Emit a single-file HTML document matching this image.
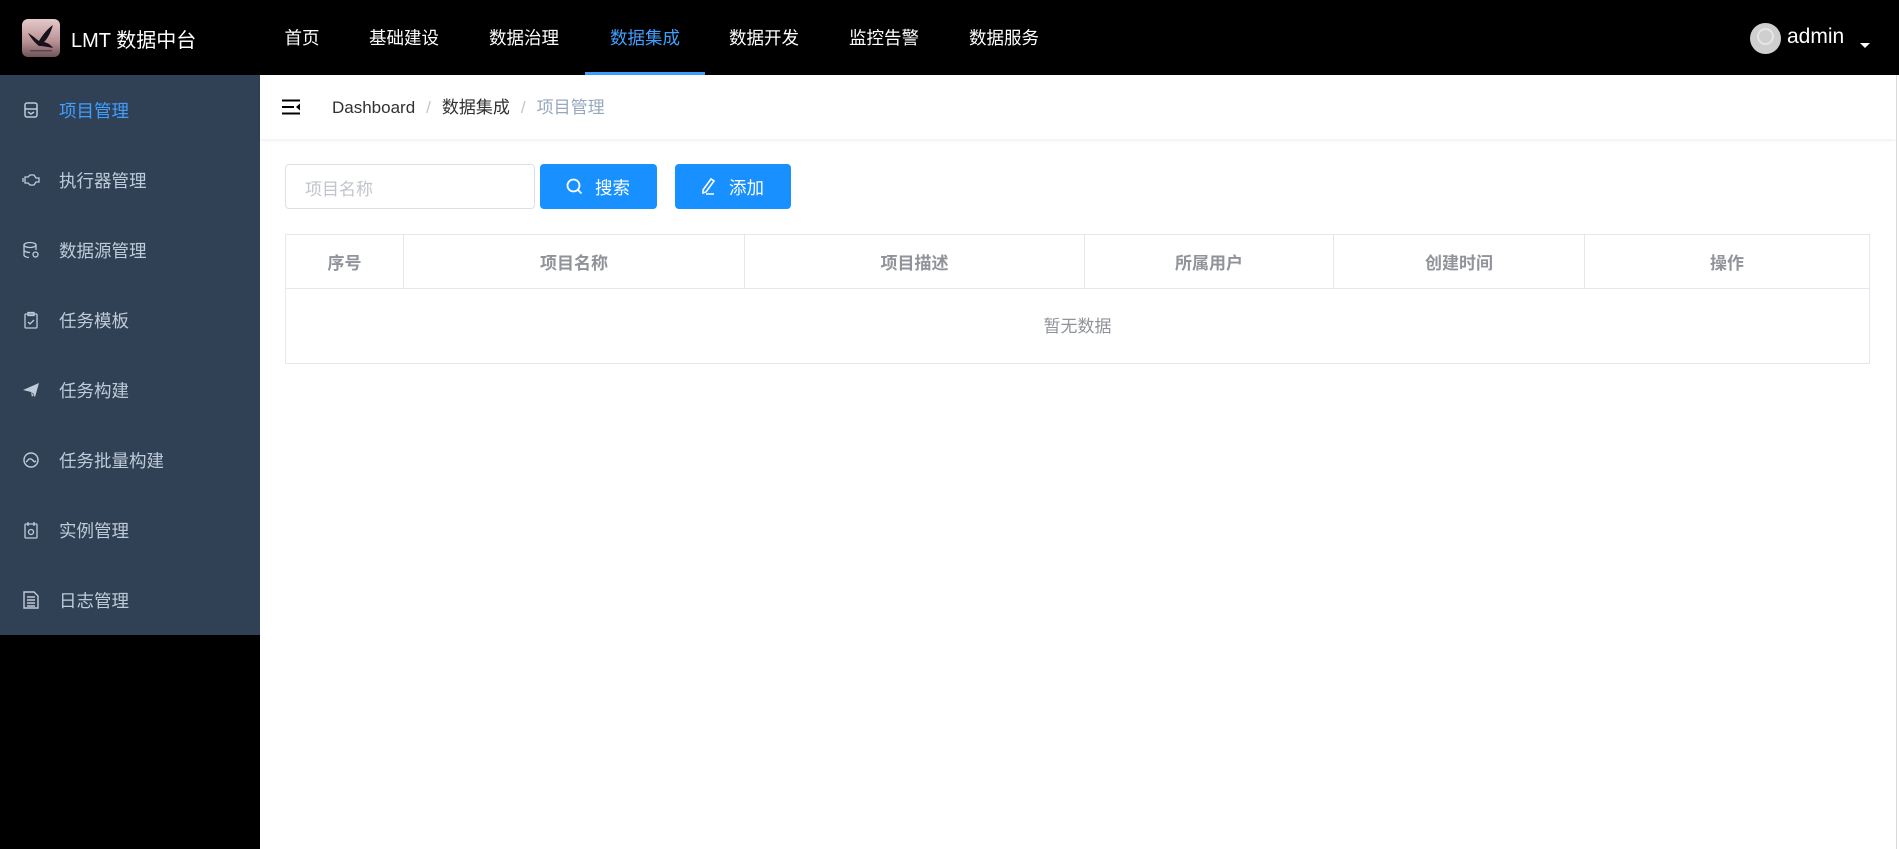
<!DOCTYPE html>
<html><head><meta charset="utf-8"><style>
*{margin:0;padding:0;box-sizing:border-box}
body{width:1899px;height:849px;background:#000;position:relative;overflow:hidden;font-family:"Liberation Sans","Noto Sans CJK SC",sans-serif}
.hdr{position:absolute;left:0;top:0;width:1899px;height:75px;background:#000}
.logo{position:absolute;left:22px;top:19px;width:38px;height:38px;border-radius:6px;background:linear-gradient(#e6c9ca,#b99094 60%,#6f5559);overflow:hidden}
.title{position:absolute;left:71px;top:24px;color:#fff;font-size:20px}
.nav{position:absolute;top:25px;color:#fff;font-size:17.5px;transform:translateX(-50%)}
.ul{position:absolute;left:585px;top:72px;width:120px;height:3px;background:#409eff}
.side{position:absolute;left:0;top:75px;width:260px;height:560px;background:#304156}
.mi{position:absolute;left:0;width:260px;height:70px;color:#bfcbd9;font-size:17.5px}
.mi span{position:absolute;left:59px;top:23px}
.mi svg{position:absolute;left:22px;top:26px}
.main{position:absolute;left:260px;top:75px;width:1636px;height:774px;background:#fff}
.bc{position:absolute;left:0;top:0;width:1636px;height:64px;box-shadow:0 1px 4px rgba(0,21,41,.08)}
.bct{position:absolute;left:72px;top:18px;font-size:17px;color:#303133}
.bct .s{color:#c0c4cc;margin:0 11px}
.bct .l{color:#97a8be}
.inp{position:absolute;left:25px;top:89px;width:250px;height:45px;border:1px solid #dcdfe6;border-radius:4px;color:#c0c4cc;font-size:17px;padding:10px 0 0 19px}
.btn{position:absolute;top:89px;height:45px;background:#1890ff;border-radius:4px;color:#fff;font-size:17.5px}
table{position:absolute;left:25px;top:159px;width:1585px;border-collapse:collapse}
td,th{border:1px solid #e3e8ef;font-size:17px;text-align:center}
th{height:54px;color:#909399;font-weight:bold}
td{height:75px;color:#909399;font-weight:normal;padding-bottom:4px}
</style></head><body>
<div class="hdr">
<div class="logo"><svg width="38" height="38" viewBox="0 0 38 38"><path d="M6 14 C10 16 14 20 17 22 C20 17 25 10 31 6 C29 12 27 18 22 23 C26 24 29 26 31 29 C26 28 21 27 17 27 C13 24 9 19 6 14Z" fill="#15121c"/><rect x="8" y="31" width="22" height="1.5" fill="#5a4550"/></svg></div>
<div class="title">LMT 数据中台</div>
<div class="nav" style="left:302px">首页</div>
<div class="nav" style="left:404px">基础建设</div>
<div class="nav" style="left:524px">数据治理</div>
<div class="nav" style="left:645px;color:#409eff">数据集成</div>
<div class="nav" style="left:764px">数据开发</div>
<div class="nav" style="left:884px">监控告警</div>
<div class="nav" style="left:1004px">数据服务</div>
<div class="ul"></div>
<div style="position:absolute;left:1750px;top:23px;width:31px;height:31px;border-radius:50%;background:#cfcfcf"><div style="position:absolute;left:7px;top:5px;width:17px;height:17px;border-radius:50%;border:2px solid #e6e6e6"></div></div>
<div style="position:absolute;left:1787px;top:21px;color:#fff;font-size:21px;line-height:32px">admin</div>
<div style="position:absolute;left:1860px;top:43px;width:0;height:0;border-left:5px solid transparent;border-right:5px solid transparent;border-top:5px solid #fff"></div>
</div>
<div class="side">
<div class="mi" style="top:0;color:#409eff"><svg width="18" height="18" viewBox="0 0 18 18" fill="none" stroke="#bfcbd9" stroke-width="1.5"><rect x="3" y="2" width="12" height="14" rx="2"/><path d="M3 8h12M6 11l3 2 3-2"/></svg><span>项目管理</span></div>
<div class="mi" style="top:70px"><svg width="18" height="18" viewBox="0 0 18 18" fill="none" stroke="#bfcbd9" stroke-width="1.3"><path d="M1 7v4M3 6h3l2-2h4l2 3h3v4h-3l-2 3H8L6 12H3z"/></svg><span>执行器管理</span></div>
<div class="mi" style="top:140px"><svg width="18" height="18" viewBox="0 0 18 18" fill="none" stroke="#bfcbd9" stroke-width="1.3"><ellipse cx="8" cy="4" rx="6" ry="2.5"/><path d="M2 4v10c0 1.5 3 2.5 5 2.5M14 4v5M2 9c0 1.4 3 2.5 6 2.5"/><circle cx="13.5" cy="13.5" r="2.5"/></svg><span>数据源管理</span></div>
<div class="mi" style="top:210px"><svg width="18" height="18" viewBox="0 0 18 18" fill="none" stroke="#bfcbd9" stroke-width="1.3"><rect x="3" y="3" width="12" height="14" rx="1"/><rect x="6" y="1.5" width="6" height="3"/><path d="M6 11l2 2 4-4"/></svg><span>任务模板</span></div>
<div class="mi" style="top:280px"><svg width="18" height="18" viewBox="0 0 18 18"><path d="M1 9L17 2 13 16 9 11z M9 11l1 5 2-3z" fill="#bfcbd9"/></svg><span>任务构建</span></div>
<div class="mi" style="top:350px"><svg width="18" height="18" viewBox="0 0 18 18" fill="none" stroke="#bfcbd9" stroke-width="1.4"><circle cx="9" cy="9" r="7"/><path d="M4 11c2-1 2-4 5-3s2 4 5 2"/></svg><span>任务批量构建</span></div>
<div class="mi" style="top:420px"><svg width="18" height="18" viewBox="0 0 18 18" fill="none" stroke="#bfcbd9" stroke-width="1.3"><rect x="3" y="3" width="12" height="14" rx="1"/><path d="M6 1v4M12 1v4"/><circle cx="9" cy="11" r="2.5"/></svg><span>实例管理</span></div>
<div class="mi" style="top:490px"><svg width="18" height="18" viewBox="0 0 18 18" fill="none" stroke="#bfcbd9" stroke-width="1.4"><path d="M2 1h10l4 4v12H2z"/><path d="M5 6h8M5 9h8M5 12h8M5 15h8"/></svg><span>日志管理</span></div>
</div>
<div class="main">
<div class="bc">
<svg style="position:absolute;left:21px;top:24px" width="20" height="16" viewBox="0 0 20 16"><path d="M1 1.5h18M1 8h12M1 14.5h18" stroke="#000" stroke-width="2"/><path d="M19 4.5v7l-4-3.5z" fill="#000"/></svg>
<div class="bct">Dashboard<span class="s">/</span>数据集成<span class="s">/</span><span class="l">项目管理</span></div>
</div>
<div class="inp">项目名称</div>
<div class="btn" style="left:280px;width:117px"><svg style="position:absolute;left:26px;top:14px" width="17" height="17" viewBox="0 0 17 17" fill="none" stroke="#fff" stroke-width="1.8"><circle cx="7.5" cy="7.5" r="6"/><path d="M12 12l3.5 3.5"/></svg><span style="position:absolute;left:55px;top:11px">搜索</span></div>
<div class="btn" style="left:415px;width:116px"><svg style="position:absolute;left:25px;top:13px" width="17" height="18" viewBox="0 0 17 18" fill="none" stroke="#fff" stroke-width="1.6"><path d="M3 13L11 2l3 2-8 11-3 1z M6 17h8"/></svg><span style="position:absolute;left:54px;top:11px">添加</span></div>
<table>
<tr><th style="width:118px">序号</th><th style="width:341px">项目名称</th><th style="width:340px">项目描述</th><th style="width:249px">所属用户</th><th style="width:251px">创建时间</th><th>操作</th></tr>
<tr><td colspan="6">暂无数据</td></tr>
</table>
</div>
<div style="position:absolute;left:1896px;top:75px;width:1px;height:774px;background:#d9d9d9"></div>
<div style="position:absolute;left:1897px;top:75px;width:2px;height:774px;background:#fff"></div>
</body></html>
